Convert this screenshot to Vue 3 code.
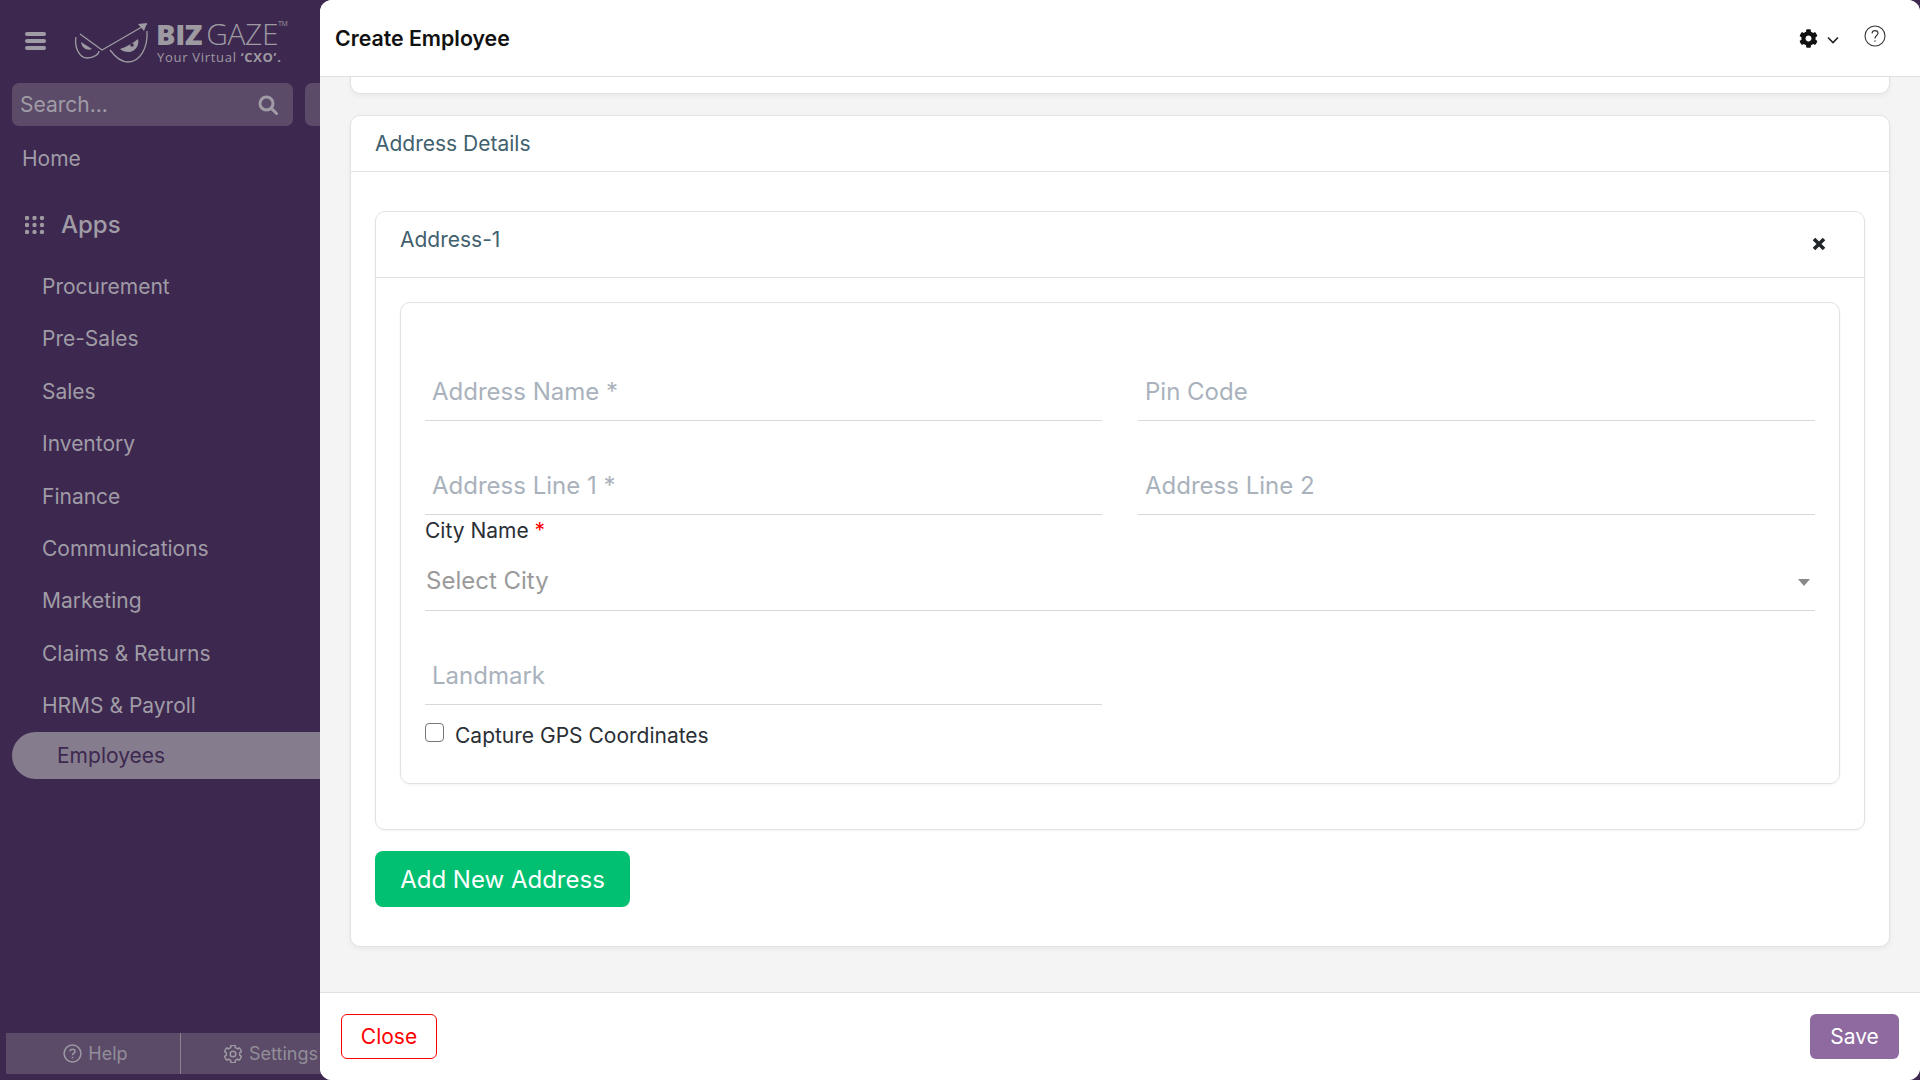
<template>
  <div class="page">
    <aside class="sidebar">
      <div class="brand">
        <svg class="burger" width="22" height="18" viewBox="0 0 22 18">
          <rect x="0" y="0" width="21" height="4" rx="2" />
          <rect x="0" y="7" width="21" height="4" rx="2" />
          <rect x="0" y="14" width="21" height="4" rx="2" />
        </svg>
        <svg class="logo-mark" width="80" height="50" viewBox="0 0 80 50" fill="none" stroke="#9d9aa1" stroke-width="1.3">
          <path d="M4 19C2 30 8 40 15 40C22 40 27 36 27 33" />
          <path d="M8 16L30 32L75 6" />
          <path d="M38 32C44 40 50 44 56 44C68 44 76 30 75 13" />
          <path d="M9 24L20 31C16 33 10 31 9 24Z" fill="#9d9aa1" stroke="none" />
          <path d="M48 31C54 29 61 25 66 21C68 28 62 34 57 34C53 34 50 33 48 31Z" fill="#9d9aa1" stroke="none" />
          <circle cx="60" cy="27" r="1.8" fill="#3d2850" stroke="none" />
          <path d="M75 5L66 6L72 13Z" fill="#9d9aa1" stroke="none" />
        </svg>
        <div class="logo-text">
          <div class="logo-name"><b>BIZ</b><span>GAZE</span><sup>TM</sup></div>
          <div class="logo-tag">Your Virtual <b>‘CXO’.</b></div>
        </div>
      </div>

      <div class="search-row">
        <div class="search">
          <span>Search...</span>
          <svg width="20" height="20" viewBox="0 0 20 20" fill="none" stroke="#a09ca6" stroke-width="3">
            <circle cx="8.5" cy="8.5" r="6.5" />
            <path d="M13.5 13.5L18.5 18.5" stroke-linecap="round" />
          </svg>
        </div>
        <div class="search-next"></div>
      </div>

      <a class="home">Home</a>
      <div class="apps">
        <svg width="20" height="18" viewBox="0 0 20 18" fill="#9d9aa1">
          <template v-for="y in [2, 9, 16]" :key="y">
            <circle v-for="x in [2, 9.5, 17]" :key="x" :cx="x" :cy="y" r="2.2" />
          </template>
        </svg>
        <span>Apps</span>
      </div>

      <nav class="menu">
        <a v-for="item in menuItems" :key="item">{{ item }}</a>
      </nav>
      <div class="menu-active">Employees</div>

      <div class="side-foot">
        <div class="foot-help">
          <svg width="19" height="19" viewBox="0 0 18 18" fill="none" stroke="#9d9aa1" stroke-width="1.4">
            <circle cx="9" cy="9" r="8" />
            <path d="M6.6 7C6.8 5.6 7.8 5 9 5C10.4 5 11.4 5.9 11.4 7C11.4 8.6 9 8.7 9 10.6" />
            <path d="M9 12.2V13.6" />
          </svg>
          <span>Help</span>
        </div>
        <div class="foot-settings">
          <svg width="18" height="18" viewBox="0 0 512 512" fill="none" stroke="#9d9aa1" stroke-width="42">
            <path :d="gearPath" />
          </svg>
          <span>Settings</span>
        </div>
      </div>
    </aside>

    <main class="panel">
      <header class="topbar">
        <h1>Create Employee</h1>
        <div class="top-actions">
          <svg width="19" height="19" viewBox="0 0 512 512" fill="#111"><path :d="gearPath" /></svg>
          <svg class="chev" width="12" height="8" viewBox="0 0 12 8" fill="none" stroke="#222" stroke-width="1.6">
            <path d="M1 1.5L6 6.5L11 1.5" />
          </svg>
          <svg class="help" width="22" height="22" viewBox="0 0 22 22" fill="none" stroke="#333" stroke-width="1.1">
            <circle cx="11" cy="11" r="10" />
            <path d="M8 8.4C8.2 6.6 9.5 5.6 11 5.6C12.7 5.6 14 6.8 14 8.3C14 10.5 11 10.6 11 13.4" />
            <path d="M11 15.4V16.6" stroke-width="1.5" />
          </svg>
        </div>
      </header>

      <section class="content">
        <div class="card-stub"></div>

        <div class="card">
          <div class="card-title">Address Details</div>
          <div class="card-body">
            <div class="address">
              <div class="address-head">
                <span>Address-1</span>
                <svg width="14" height="14" viewBox="0 0 14 14" stroke="#1f2529" stroke-width="3.6">
                  <path d="M2 2L12 12M12 2L2 12" />
                </svg>
              </div>
              <div class="address-body">
                <div class="form">
                  <div class="row">
                    <div class="field">Address Name *</div>
                    <div class="field">Pin Code</div>
                  </div>
                  <div class="row">
                    <div class="field">Address Line 1 *</div>
                    <div class="field">Address Line 2</div>
                  </div>
                  <label class="city-label">City Name <i>*</i></label>
                  <div class="select">
                    <span>Select City</span>
                    <span class="caret"></span>
                  </div>
                  <div class="row">
                    <div class="field">Landmark</div>
                  </div>
                  <div class="gps">
                    <span class="checkbox"></span>
                    <span>Capture GPS Coordinates</span>
                  </div>
                </div>
              </div>
            </div>
            <button class="add-btn">Add New Address</button>
          </div>
        </div>
      </section>

      <footer class="bottombar">
        <button class="close-btn">Close</button>
        <button class="save-btn">Save</button>
      </footer>
    </main>
  </div>
</template>

<script setup>
const menuItems = [
  'Procurement',
  'Pre-Sales',
  'Sales',
  'Inventory',
  'Finance',
  'Communications',
  'Marketing',
  'Claims & Returns',
  'HRMS & Payroll',
]

const gearPath =
  'M487.4 315.7l-42.6-24.6c4.3-23.2 4.3-47 0-70.2l42.6-24.6c4.9-2.8 7.1-8.6 5.5-14-11.1-35.6-30-67.8-54.7-94.6-3.8-4.1-10-5.1-14.8-2.3L380.8 110c-17.9-15.4-38.5-27.3-60.8-35.1V25.8c0-5.6-3.9-10.5-9.4-11.7-36.7-8.2-74.3-7.8-109.2 0-5.5 1.2-9.4 6.1-9.4 11.7V75c-22.2 7.9-42.8 19.8-60.8 35.1L88.7 85.5c-4.9-2.8-11-1.9-14.8 2.3-24.7 26.7-43.6 58.9-54.7 94.6-1.7 5.4.6 11.2 5.5 14L67.3 221c-4.3 23.2-4.3 47 0 70.2l-42.6 24.6c-4.9 2.8-7.1 8.6-5.5 14 11.1 35.6 30 67.8 54.7 94.6 3.8 4.1 10 5.1 14.8 2.3l42.6-24.6c17.9 15.4 38.5 27.3 60.8 35.1v49.2c0 5.6 3.9 10.5 9.4 11.7 36.7 8.2 74.3 7.8 109.2 0 5.5-1.2 9.4-6.1 9.4-11.7v-49.2c22.2-7.9 42.8-19.8 60.8-35.1l42.6 24.6c4.9 2.8 11 1.9 14.8-2.3 24.7-26.7 43.6-58.9 54.7-94.6 1.5-5.5-.7-11.3-5.6-14.1zM256 336c-44.1 0-80-35.9-80-80s35.9-80 80-80 80 35.9 80 80-35.9 80-80 80z'
</script>

<style>
html,
body {
  margin: 0;
  background: #3d2850;
}
</style>

<style scoped>
.page {
  display: flex;
  width: 1920px;
  height: 1080px;
  overflow: hidden;
  background: #3d2850;
  font-family: Inter, "Liberation Sans", sans-serif;
}

/* Sidebar */
.sidebar {
  flex: 0 0 340px;
  display: flex;
  flex-direction: column;
  color: #a09ca6;
  font-size: 21px;
}

.brand {
  display: flex;
  align-items: flex-start;
  height: 83px;
  box-sizing: border-box;
  padding: 18px 0 0 25px;
}

.burger {
  margin-top: 14px;
  fill: #a09ca6;
}

.logo-mark {
  margin-left: 25px;
}

.logo-text {
  margin-left: 4px;
  font-family: "Open Sans", sans-serif;
  color: #9d9aa1;
}

.logo-name {
  display: flex;
  height: 32px;
  align-items: flex-start;
  font-size: 29px;
  line-height: 32px;
  letter-spacing: -0.4px;
}

.logo-name b {
  font-weight: 800;
}

.logo-name span {
  margin-left: 4px;
  font-size: 30px;
  font-weight: 300;
}

.logo-name sup {
  font-size: 7px;
  line-height: 10px;
  margin-top: 1px;
}

.logo-tag {
  margin-left: 1px;
  font-size: 13px;
  line-height: 14px;
  letter-spacing: 0.7px;
}

.search-row {
  display: flex;
  gap: 12px;
  padding-left: 12px;
}

.search {
  flex: 0 0 281px;
  height: 43px;
  box-sizing: border-box;
  display: flex;
  align-items: center;
  justify-content: space-between;
  padding: 0 15px 0 8px;
  background: #5b4b69;
  border-radius: 7px;
}

.search-next {
  flex: 1;
  background: #5b4b69;
  border-radius: 7px;
}

.home {
  padding-left: 22px;
  margin-top: 19px;
  line-height: 28px;
}

.apps {
  display: flex;
  align-items: center;
  gap: 16px;
  margin-top: 37px;
  padding-left: 25px;
  font-size: 24px;
  font-weight: 500;
  line-height: 30px;
}

.menu {
  display: flex;
  flex-direction: column;
  margin-top: 21px;
}

.menu a {
  height: 52.4px;
  line-height: 52.4px;
  padding-left: 42px;
}

.menu-active {
  height: 47px;
  line-height: 48px;
  margin: -1px 0 0 12px;
  padding-left: 45px;
  background: #857c8d;
  border-radius: 24px 0 0 24px;
  color: #3d2850;
}

.side-foot {
  display: flex;
  height: 41px;
  margin: auto 0 6px 6px;
  background: #5b4b69;
  font-size: 18px;
  color: #928e98;
}

.foot-help,
.foot-settings {
  display: flex;
  align-items: center;
}

.foot-help {
  flex: 0 0 174px;
  justify-content: center;
  gap: 6px;
  border-right: 1px solid #8a8490;
}

.foot-help svg {
  margin-left: 5px;
}

.foot-settings {
  gap: 7px;
  padding-left: 43px;
}

/* Main panel */
.panel {
  position: relative;
  flex: 1;
  min-width: 0;
  margin-left: -20px;
  display: flex;
  flex-direction: column;
  background: #f4f4f5;
  border-radius: 12px;
  overflow: hidden;
}

.topbar {
  flex: 0 0 77px;
  box-sizing: border-box;
  display: flex;
  align-items: center;
  justify-content: space-between;
  padding: 0 34px 0 15px;
  background: #fff;
  border-bottom: 1px solid #dfe0e4;
}

.topbar h1 {
  margin: 0;
  font-size: 21.3px;
  font-weight: 600;
  color: #111;
}

.top-actions {
  display: flex;
  align-items: center;
}

.chev {
  margin: 4px 0 0 9px;
}

.help {
  margin: -4px 0 0 25px;
}

.content {
  flex: 1;
  min-height: 0;
  padding: 0 30px;
}

.card-stub {
  height: 16px;
  background: #fff;
  border: 1px solid #e1e2e6;
  border-top: 0;
  border-radius: 0 0 10px 10px;
  box-shadow: 0 2px 5px rgba(0, 0, 0, 0.05);
}

.card {
  margin-top: 21px;
  height: 832px;
  box-sizing: border-box;
  background: #fff;
  border: 1px solid #e1e2e6;
  border-radius: 10px;
  box-shadow: 0 2px 5px rgba(0, 0, 0, 0.05);
}

.card-title {
  height: 56px;
  box-sizing: border-box;
  padding-left: 24px;
  line-height: 55px;
  font-size: 21px;
  color: #41606e;
  border-bottom: 1px solid #e1e2e6;
}

.card-body {
  padding: 39px 24px 0;
}

.address {
  height: 619px;
  box-sizing: border-box;
  border: 1px solid #e1e2e6;
  border-radius: 10px;
  box-shadow: 0 1px 3px rgba(0, 0, 0, 0.05);
}

.address-head {
  height: 66px;
  box-sizing: border-box;
  display: flex;
  align-items: flex-start;
  justify-content: space-between;
  padding: 15px 38px 0 24px;
  font-size: 21px;
  line-height: 26px;
  color: #41606e;
  border-bottom: 1px solid #e1e2e6;
}

.address-head svg {
  margin-top: 10px;
}

.address-body {
  padding: 24px;
}

.form {
  height: 482px;
  box-sizing: border-box;
  padding: 24px 24px 0;
  border: 1px solid #e1e2e6;
  border-radius: 10px;
  box-shadow: 0 1px 3px rgba(0, 0, 0, 0.05);
}

.row {
  display: grid;
  grid-template-columns: 677px 677px;
  gap: 36px;
}

.field {
  height: 94px;
  box-sizing: border-box;
  padding: 48px 0 0 7px;
  line-height: 34px;
  font-size: 24px;
  color: #a9b2bc;
  border-bottom: 1px solid #d5d8dc;
}

.city-label {
  display: block;
  margin-top: 3px;
  font-size: 21px;
  line-height: 26px;
  color: #2a2f36;
}

.city-label i {
  font-style: normal;
  color: #f00;
}

.select {
  height: 67px;
  box-sizing: border-box;
  display: flex;
  align-items: center;
  justify-content: space-between;
  padding: 6px 5px 0 1px;
  font-size: 24px;
  color: #9a9a9a;
  border-bottom: 1px solid #d5d8dc;
}

.caret {
  width: 0;
  height: 0;
  margin-top: 4px;
  border-left: 6px solid transparent;
  border-right: 6px solid transparent;
  border-top: 7px solid #888;
}

.gps {
  display: flex;
  align-items: center;
  gap: 11px;
  margin-top: 18px;
  font-size: 21px;
  line-height: 26px;
  color: #2a2f36;
}

.checkbox {
  width: 19px;
  height: 19px;
  box-sizing: border-box;
  border: 1px solid #777;
  border-radius: 4px;
  margin-top: -8px;
}

.add-btn {
  display: block;
  width: 255px;
  height: 56px;
  margin-top: 21px;
  background: #02c072;
  color: #fff;
  border: 0;
  border-radius: 8px;
  font: 400 24px Inter, sans-serif;
}

.bottombar {
  flex: 0 0 88px;
  box-sizing: border-box;
  display: flex;
  align-items: center;
  justify-content: space-between;
  padding: 0 21px;
  background: #fff;
  border-top: 1px solid #dfe0e4;
}

.close-btn,
.save-btn {
  height: 45px;
  border-radius: 6px;
  font: 400 21px Inter, sans-serif;
}

.close-btn {
  width: 96px;
  background: #fff;
  color: #f00;
  border: 1px solid #f00;
}

.save-btn {
  width: 89px;
  background: #8e6aa0;
  color: #fff;
  border: 0;
}
</style>
